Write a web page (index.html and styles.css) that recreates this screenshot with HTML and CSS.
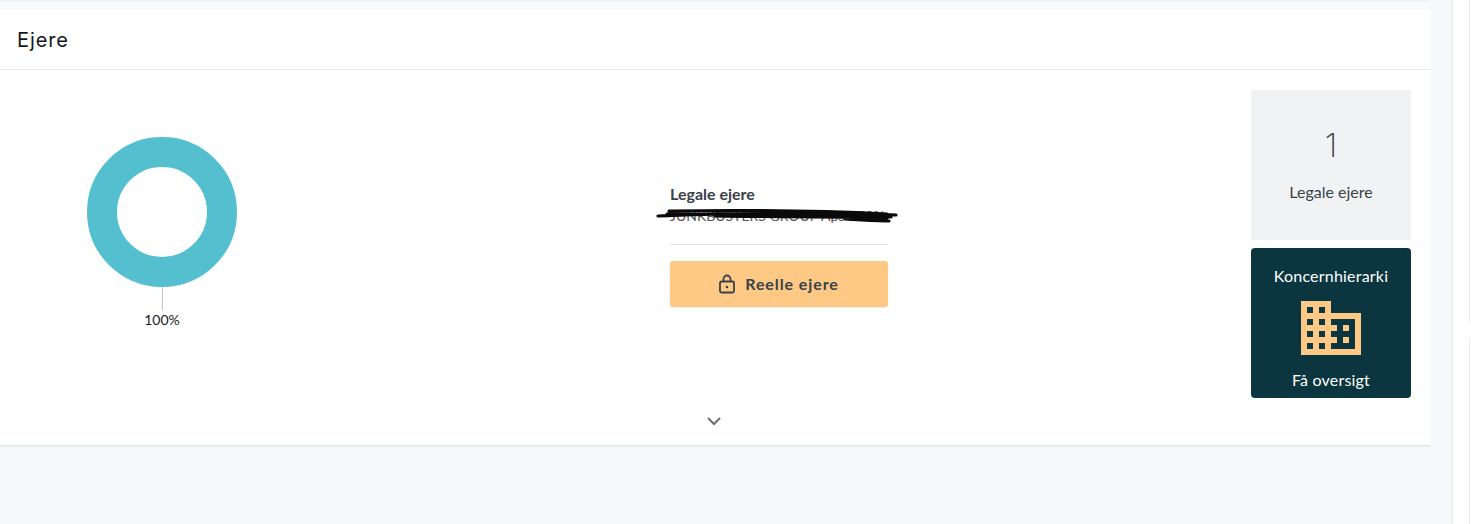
FILE: index.html
```html
<!DOCTYPE html>
<html lang="da">
<head>
<meta charset="utf-8">
<title>Ejere</title>
<link rel="stylesheet" href="styles.css">
</head>
<body>
<div class="page">
  <main class="content">
    <section class="card">
      <header class="card-head"><h2 class="card-title">Ejere</h2></header>
      <div class="card-body">
        <div class="chart">
          <svg class="donut" width="150" height="150" viewBox="0 0 150 150"><circle cx="75" cy="75" r="60" fill="none" stroke="#53bfcf" stroke-width="30"/></svg>
          <span class="leader"></span>
          <span class="chart-label">100%</span>
        </div>
        <div class="owners">
          <div class="owners-inner">
            <h3 class="owners-title">Legale ejere</h3>
            <div class="redacted">
              <span class="redacted-text">JUNKBUSTERS GROUP ApS 100%</span>
              <svg class="scribble" width="246" height="20" viewBox="0 0 246 20"><path d="M3 10C60 7 180 6 241 9M14 5C80 4 170 5 232 8M12 8C80 8 160 9 236 11M60 10C110 11 170 10 232 12M190 13C210 14 222 15 234 15" fill="none" stroke="#0a0a0a" stroke-width="3.200" stroke-linecap="round"/></svg>
            </div>
            <hr class="rule">
            <button class="lock-btn" type="button">
              <svg width="18" height="20" viewBox="0 0 18 20"><path d="M3.500 7.500h11a1.500 1.500 0 0 1 1.500 1.500v8a1.500 1.500 0 0 1-1.500 1.500h-11A1.500 1.500 0 0 1 2 17V9a1.500 1.500 0 0 1 1.500-1.500zM5.500 7.500V5a3.500 3.500 0 0 1 7 0v2.500" fill="none" stroke="#3a4149" stroke-width="1.800"/><circle cx="9" cy="13" r="1.300" fill="#3a4149"/></svg>
              <span class="lock-text">Reelle ejere</span>
            </button>
          </div>
        </div>
        <aside class="side">
          <div class="stat"><span class="stat-num">1</span><span class="stat-label">Legale ejere</span></div>
          <div class="group-tile">
            <span>Koncernhierarki</span>
            <svg width="60" height="54" viewBox="0 0 60 54"><path fill="#fec984" fill-rule="evenodd" d="M0 0h30v12h30v42H0zM6 6v6h6V6zm12 0v6h6V6zM6 18v6h6v-6zm12 0v6h6v-6zM6 30v6h6v-6zm12 0v6h6v-6zM6 42v6h6v-6zm12 0v6h6v-6zM30 18v6h6v6h-6v6h6v6h-6v6h24V18zm12 6h6v6h-6zm0 12h6v6h-6z"/></svg>
            <span>Få oversigt</span>
          </div>
        </aside>
      </div>
      <div class="expand">
        <svg width="16" height="10" viewBox="0 0 16 10"><path d="M2 2l6 6 6-6" fill="none" stroke="#6f7376" stroke-width="2.200"/></svg>
      </div>
    </section>
  </main>
  <div class="gutter"></div>
  <div class="rail">
    <span class="rail-card rail-card-top"></span>
    <span class="rail-card rail-card-bottom"></span>
  </div>
</div>
</body>
</html>
```
FILE: styles.css
```css
* { box-sizing: border-box; }
html, body { margin: 0; height: 100%; }
body { background: #f6fafa; font-family: Lato, "Liberation Sans", sans-serif; color: #3a4149; overflow: hidden; }
.page { display: flex; height: 524px; }
.content { width: 1431px; padding-top: 9px; box-shadow: inset 0 2px 2px -1px rgba(0,0,0,.05); }
.card { background: #fff; height: 436px; box-shadow: 0 1px 2px rgba(0,0,0,.12); }
.card-head { height: 61px; border-bottom: 1px solid #e9ebec; padding: 1px 0 0 17px; display: flex; align-items: center; }
.card-title { margin: 0; font-family: Inter, "Noto Sans", sans-serif; font-weight: 400; font-size: 20px; letter-spacing: .9px; color: #14181b; }
.card-body { display: flex; height: 328px; padding: 20px 20px 0 0; }
.chart { width: 324px; display: flex; flex-direction: column; align-items: center; padding-top: 47px; }
.donut { display: block; }
.leader { width: 1px; height: 24px; background: #bfc4c6; }
.chart-label { font-size: 14px; line-height: 18px; color: #1a1a1a; }
.owners { flex: 1; display: flex; justify-content: center; padding-top: 94px; }
.owners-inner { width: 218px; margin-right: 17px; }
.owners-title { margin: 0; font-size: 16px; font-weight: 700; line-height: 20px; color: #3a4149; }
.redacted { position: relative; height: 24px; font-size: 14px; line-height: 24px; white-space: nowrap; }
.redacted-text { color: #555; }
.scribble { position: absolute; left: -15px; top: 2px; }
.rule { border: 0; border-top: 1px solid #dfe3e5; margin: 16px 0; }
.lock-btn { width: 218px; height: 46px; border: 0; border-radius: 3px; background: #fec984; box-shadow: 0 1px 2px rgba(0,0,0,.08); display: flex; align-items: center; justify-content: center; gap: 9px; padding: 0 1px 0 0; font: 700 16px Lato, sans-serif; letter-spacing: .9px; color: #3a4149; }
.lock-text { padding-bottom: 2px; }
.side { width: 160px; display: flex; flex-direction: column; gap: 8px; }
.stat { height: 150px; background: #f1f2f4; display: flex; flex-direction: column; align-items: center; text-align: center; }
.stat-num { font-family: Inter, sans-serif; font-size: 33px; font-weight: 200; line-height: 44px; margin-top: 33px; color: #3a4149; }
.stat-label { font-size: 16px; line-height: 20px; margin-top: 15px; }
.group-tile { height: 150px; background: #0b3640; border-radius: 4px; color: #fff; font-size: 16px; letter-spacing: .2px; display: flex; flex-direction: column; align-items: center; justify-content: space-between; padding: 18px 0 9px; }
.expand { display: flex; justify-content: center; padding: 18px 4px 0 0; }
.gutter { width: 22px; background: #f6f8fa; }
.rail { width: 18px; position: relative; background: #fff; box-shadow: -1px 0 1px rgba(0,0,0,.06); }
.rail-card { position: absolute; right: 0; width: 2px; border-left: 1px solid #e9ecee; }
.rail-card-top { top: 0; height: 321px; border-bottom-left-radius: 3px; border-bottom: 1px solid #e9ecee; }
.rail-card-bottom { top: 338px; bottom: 0; border-top-left-radius: 3px; border-top: 1px solid #e9ecee; }
```
